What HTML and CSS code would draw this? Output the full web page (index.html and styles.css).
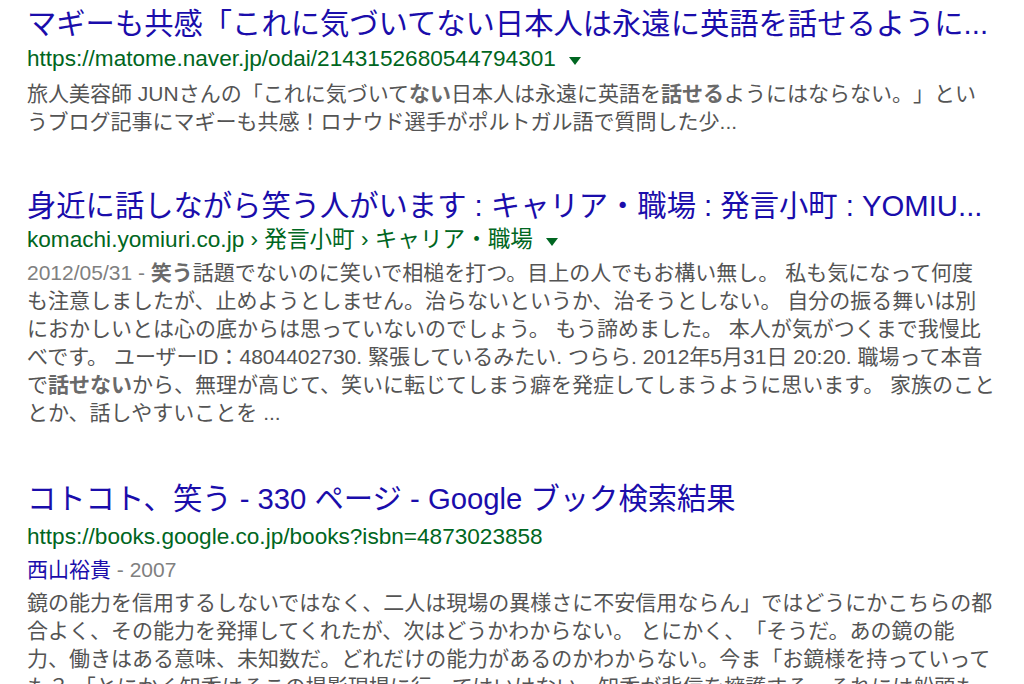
FILE: index.html
```html
<!DOCTYPE html>
<html lang="ja">
<head>
<meta charset="utf-8">
<title>検索結果</title>
<link rel="stylesheet" href="styles.css">
</head>
<body>
<div class="results">
  <div class="g g-first">
    <h3 class="title"><a href="#">マギーも共感「これに気づいてない日本人は永遠に英語を話せるように...</a></h3>
    <div class="url"><cite>https://matome.naver.jp/odai/2143152680544794301</cite><span class="arrow"></span></div>
    <div class="snippet">旅人美容師 JUNさんの「これに気づいて<b>ない</b>日本人は永遠に英語を<b>話せる</b>ようにはならない。」とい<br>うブログ記事にマギーも共感！ロナウド選手がポルトガル語で質問した少...</div>
  </div>
  <div class="g">
    <h3 class="title"><a href="#">身近に話しながら笑う人がいます : キャリア・職場 : 発言小町 : YOMIU...</a></h3>
    <div class="url"><cite>komachi.yomiuri.co.jp › 発言小町 › キャリア・職場</cite><span class="arrow"></span></div>
    <div class="snippet"><span class="date">2012/05/31 - </span><b>笑う</b>話題でないのに笑いで相槌を打つ。目上の人でもお構い無し。 私も気になって何度<br>も注意しましたが、止めようとしません。治らないというか、治そうとしない。 自分の振る舞いは別<br>におかしいとは心の底からは思っていないのでしょう。 もう諦めました。 本人が気がつくまで我慢比<br>べです。 ユーザーID：4804402730. 緊張しているみたい. つらら. 2012年5月31日 20:20. 職場って本音<br>で<b>話せない</b>から、無理が高じて、笑いに転じてしまう癖を発症してしまうように思います。 家族のこと<br>とか、話しやすいことを ...</div>
  </div>
  <div class="g g-book">
    <h3 class="title"><a href="#">コトコト、笑う - 330 ページ - Google ブック検索結果</a></h3>
    <div class="url"><cite>https://books.google.co.jp/books?isbn=4873023858</cite></div>
    <div class="snippet"><div class="meta"><a href="#">西山裕貴</a><span class="date"> - 2007</span></div>鏡の能力を信用するしないではなく、二人は現場の異様さに不安信用ならん」ではどうにかこちらの都<br>合よく、その能力を発揮してくれたが、次はどうかわからない。 とにかく、「そうだ。あの鏡の能<br>力、働きはある意味、未知数だ。どれだけの能力があるのかわからない。今ま「お鏡様を持っていって<br>も？ 「とにかく知香はそこの撮影現場に行ってはいけない。知香が背信を擁護する。それには船頭も</div>
  </div>
</div>
</body>
</html>
```

FILE: styles.css
```css
html, body {
  margin: 0;
  padding: 0;
  background: #ffffff;
}

body {
  width: 1024px;
  height: 684px;
  overflow: hidden;
  font-family: "Liberation Sans", Arial, "Noto Sans CJK JP", sans-serif;
  text-spacing-trim: space-all;
}

.results {
  padding: 6px 0 0 27px;
}

.g {
  margin-bottom: 54px;
}

.g-first {
  margin-bottom: 52px;
}

.g-first .url {
  margin-top: 1px;
}

.g-first .snippet {
  margin-top: 5px;
}

.g-book .url {
  margin-top: 4px;
}

.title {
  margin: 0;
  font-size: 29.3px;
  font-weight: normal;
  line-height: 36px;
  white-space: nowrap;
}

.title a {
  color: #1a0dab;
  text-decoration: none;
}

.url {
  display: flex;
  align-items: center;
  height: 32px;
  font-size: 22.6px;
  line-height: 32px;
  white-space: nowrap;
}

.url cite {
  font-style: normal;
  color: #006621;
}

.arrow {
  width: 0;
  height: 0;
  margin-left: 13px;
  margin-top: 3px;
  border-left: 6px solid transparent;
  border-right: 6px solid transparent;
  border-top: 8px solid #006621;
}

.snippet {
  margin-top: 3px;
  font-size: 21px;
  line-height: 28px;
  color: #545454;
  white-space: nowrap;
}

.snippet b {
  color: #6a6a6a;
  font-weight: bold;
}

.date {
  color: #808080;
}

.meta {
  margin-bottom: 5px;
}

.meta a {
  color: #1a0dab;
  text-decoration: none;
}
```
